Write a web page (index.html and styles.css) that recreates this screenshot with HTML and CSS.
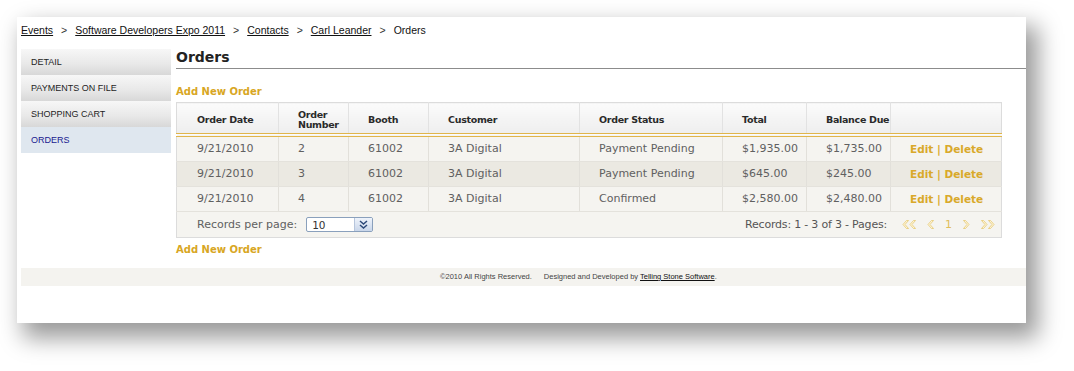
FILE: index.html
```html
<!DOCTYPE html>
<html>
<head>
<meta charset="utf-8">
<link rel="stylesheet" href="styles.css">
</head>
<body>
<div class="card">
  <div class="crumbs">
    <a href="#">Events</a><span class="sep">&gt;</span><a href="#">Software Developers Expo 2011</a><span class="sep">&gt;</span><a href="#">Contacts</a><span class="sep">&gt;</span><a href="#">Carl Leander</a><span class="sep">&gt;</span><span class="cur">Orders</span>
  </div>
  <div class="main">
    <ul class="side">
      <li class="item">DETAIL</li>
      <li class="item">PAYMENTS ON FILE</li>
      <li class="item">SHOPPING CART</li>
      <li class="item active">ORDERS</li>
    </ul>
    <div class="content">
      <h1 class="title">Orders</h1>
      <a class="add add-top" href="#">Add New Order</a>
      <table class="grid">
        <thead>
          <tr>
            <th class="c1">Order Date</th>
            <th class="c2">Order<br>Number</th>
            <th class="c3">Booth</th>
            <th class="c4">Customer</th>
            <th class="c5">Order Status</th>
            <th class="c6">Total</th>
            <th class="c7">Balance Due</th>
            <th class="c8"></th>
          </tr>
        </thead>
        <tbody>
          <tr class="odd">
            <td class="c1">9/21/2010</td><td>2</td><td>61002</td><td>3A Digital</td><td>Payment Pending</td><td>$1,935.00</td><td>$1,735.00</td><td class="act"><a href="#">Edit</a> | <a href="#">Delete</a></td>
          </tr>
          <tr class="even">
            <td class="c1">9/21/2010</td><td>3</td><td>61002</td><td>3A Digital</td><td>Payment Pending</td><td>$645.00</td><td>$245.00</td><td class="act"><a href="#">Edit</a> | <a href="#">Delete</a></td>
          </tr>
          <tr class="odd">
            <td class="c1">9/21/2010</td><td>4</td><td>61002</td><td>3A Digital</td><td>Confirmed</td><td>$2,580.00</td><td>$2,480.00</td><td class="act"><a href="#">Edit</a> | <a href="#">Delete</a></td>
          </tr>
        </tbody>
        <tfoot>
          <tr>
            <td colspan="8" class="pager-cell">
              <div class="pager">
                <div class="perpage">
                  <span>Records per page:</span>
                  <div class="select">
                    <span class="val">10</span>
                    <span class="btn"><svg width="17" height="13" viewBox="0 0 17 13"><polyline points="5,3 8.5,6 12,3" fill="none" stroke="#2d4a7a" stroke-width="1.5"/><polyline points="5,7 8.5,10 12,7" fill="none" stroke="#2d4a7a" stroke-width="1.5"/></svg></span>
                  </div>
                </div>
                <div class="pages">
                  <span class="info">Records: 1 - 3 of 3 - Pages:</span>
                  <span class="nav">
                    <svg class="ic" width="15" height="9" viewBox="0 0 15 9"><polygon points="4.5,0.5 6.5,0.5 3,4.5 6.5,8.5 4.5,8.5 1,4.5" fill="#fff8e0" stroke="#e6c86e" stroke-width="0.8"/><polygon points="11.5,0.5 13.5,0.5 10,4.5 13.5,8.5 11.5,8.5 8,4.5" fill="#fff8e0" stroke="#e6c86e" stroke-width="0.8"/></svg>
                    <svg class="ic" width="8" height="9" viewBox="0 0 8 9"><polygon points="4.5,0.5 6.5,0.5 3,4.5 6.5,8.5 4.5,8.5 1,4.5" fill="#fff8e0" stroke="#e6c86e" stroke-width="0.8"/></svg>
                    <span class="num">1</span>
                    <svg class="ic" width="8" height="9" viewBox="0 0 8 9"><polygon points="3.5,0.5 1.5,0.5 5,4.5 1.5,8.5 3.5,8.5 7,4.5" fill="#fff8e0" stroke="#e6c86e" stroke-width="0.8"/></svg>
                    <svg class="ic" width="15" height="9" viewBox="0 0 15 9"><polygon points="3.5,0.5 1.5,0.5 5,4.5 1.5,8.5 3.5,8.5 7,4.5" fill="#fff8e0" stroke="#e6c86e" stroke-width="0.8"/><polygon points="10.5,0.5 8.5,0.5 12,4.5 8.5,8.5 10.5,8.5 14,4.5" fill="#fff8e0" stroke="#e6c86e" stroke-width="0.8"/></svg>
                  </span>
                </div>
              </div>
            </td>
          </tr>
        </tfoot>
      </table>
      <a class="add add-bottom" href="#">Add New Order</a>
    </div>
  </div>
  <div class="footer">
    <span>©2010 All Rights Reserved.</span><span class="gap"></span><span>Designed and Developed by <a href="#">Telling Stone Software</a>.</span>
  </div>
</div>
</body>
</html>
```

FILE: styles.css
```css
html, body {
  margin: 0;
  padding: 0;
  background: #ffffff;
  overflow: hidden;
}

body {
  width: 1074px;
  height: 371px;
  font-family: "DejaVu Sans", Verdana, sans-serif;
}

.card {
  margin: 17px 0 0 17px;
  width: 1009px;
  height: 306px;
  background: #ffffff;
  box-shadow: 9px 12px 22px 3px rgba(0, 0, 0, 0.4);
  box-sizing: border-box;
}

/* breadcrumb */
.crumbs {
  height: 32px;
  box-sizing: border-box;
  padding: 6px 0 0 4px;
  font-family: "Liberation Sans", Arial, sans-serif;
  font-size: 10.5px;
  line-height: 14px;
  color: #111;
}

.crumbs a {
  color: #111;
  text-decoration: underline;
}

.crumbs .sep {
  margin: 0 8px;
  color: #333;
}

/* main */
.main {
  display: flex;
  align-items: flex-start;
}

.side {
  list-style: none;
  margin: 0 0 0 4px;
  padding: 0;
  width: 150px;
  flex: none;
}

.item {
  height: 26px;
  line-height: 26px;
  padding-left: 10px;
  font-family: "Liberation Sans", Arial, sans-serif;
  font-size: 9px;
  color: #1e1e1e;
  background: linear-gradient(#f7f7f7, #e9e9e9 55%, #d8d8d8);
}

.item.active {
  background: #dfe7ef;
  color: #1a1a90;
}

.content {
  margin-left: 5px;
  flex: 1;
  min-width: 0;
}

.title {
  margin: 0;
  height: 19px;
  border-bottom: 1px solid #8c8c8c;
  font-family: "DejaVu Sans", Verdana, sans-serif;
  font-size: 14px;
  font-weight: bold;
  line-height: 17px;
  color: #222;
}

.add {
  display: block;
  width: max-content;
  font-size: 10px;
  font-weight: bold;
  line-height: 14px;
  color: #d8a624;
  text-decoration: none;
}

.add-top {
  margin-top: 16px;
  margin-bottom: 3px;
}

.add-bottom {
  margin-top: 5px;
}

/* table */
.grid {
  width: 824px;
  border-collapse: collapse;
  border: 1px solid #dcdcdc;
  table-layout: fixed;
}

.grid th {
  height: 26px;
  padding: 4px 0 0 19px;
  text-align: left;
  vertical-align: middle;
  font-family: "DejaVu Sans", Verdana, sans-serif;
  font-size: 9.5px;
  font-weight: bold;
  letter-spacing: -0.3px;
  line-height: 10px;
  white-space: nowrap;
  color: #2a2a2a;
  background: linear-gradient(#fbfbfb, #eeeeee);
  border-left: 1px solid #e2e2e2;
  border-bottom: 4px double #e0b54a;
}

.grid th.c1 { width: 81px; padding-left: 20px; border-left: none; }
.grid th.c2 { width: 50px; }
.grid th.c3 { width: 60px; }
.grid th.c4 { width: 131px; }
.grid th.c5 { width: 123px; }
.grid th.c6 { width: 64px; }
.grid th.c7 { width: 64px; }
.grid th.c8 { width: 91px; }

.grid td {
  height: 24px;
  padding: 0 0 0 19px;
  font-size: 11px;
  line-height: 14px;
  color: #606060;
  border-left: 1px solid #e2e0da;
  border-bottom: 1px solid #e4e2dc;
  white-space: nowrap;
}

.grid td.c1 {
  padding-left: 20px;
  border-left: none;
}

.grid tr.odd td { background: #f5f4f0; }
.grid tr.even td { background: #ebe9e2; }

.grid td.act {
  font-size: 10.5px;
  font-weight: bold;
  color: #d9a92a;
}

.grid td.act a {
  color: #d9a92a;
  text-decoration: none;
}

.grid td.pager-cell {
  height: 25px;
  padding: 0 6px 0 20px;
  background: #f5f4f0;
  border: none;
}

.pager {
  display: flex;
  justify-content: space-between;
  align-items: center;
}

.perpage {
  display: flex;
  align-items: center;
  gap: 9px;
}

.select {
  display: flex;
  width: 65px;
  height: 13px;
  border: 1px solid #8aa0bc;
  background: #fff;
  border-radius: 2px;
}

.select .val {
  flex: 1;
  padding-left: 5px;
  font-size: 10.5px;
  line-height: 15px;
  color: #333;
}

.select .btn {
  width: 17px;
  display: flex;
  align-items: center;
  justify-content: center;
  background: linear-gradient(#eef3fb, #c9d6ea);
  border-left: 1px solid #b6c5dc;
}

.pages {
  display: flex;
  align-items: center;
}

.info {
  color: #555;
  letter-spacing: -0.2px;
}

.nav {
  display: flex;
  align-items: center;
  gap: 10px;
  margin-left: 15px;
}

.nav .num {
  color: #e0bd5a;
  font-size: 11px;
}

.nav .ic {
  display: block;
}

/* footer */
.footer {
  margin: 11px 0 0 4px;
  height: 18px;
  background: #f4f3ef;
  box-sizing: border-box;
  padding-left: 419px;
  font-family: "Liberation Sans", Arial, sans-serif;
  font-size: 7.5px;
  line-height: 18px;
  color: #444;
  white-space: nowrap;
}

.footer .gap {
  display: inline-block;
  width: 12px;
}

.footer a {
  color: #111;
  text-decoration: underline;
}
```
